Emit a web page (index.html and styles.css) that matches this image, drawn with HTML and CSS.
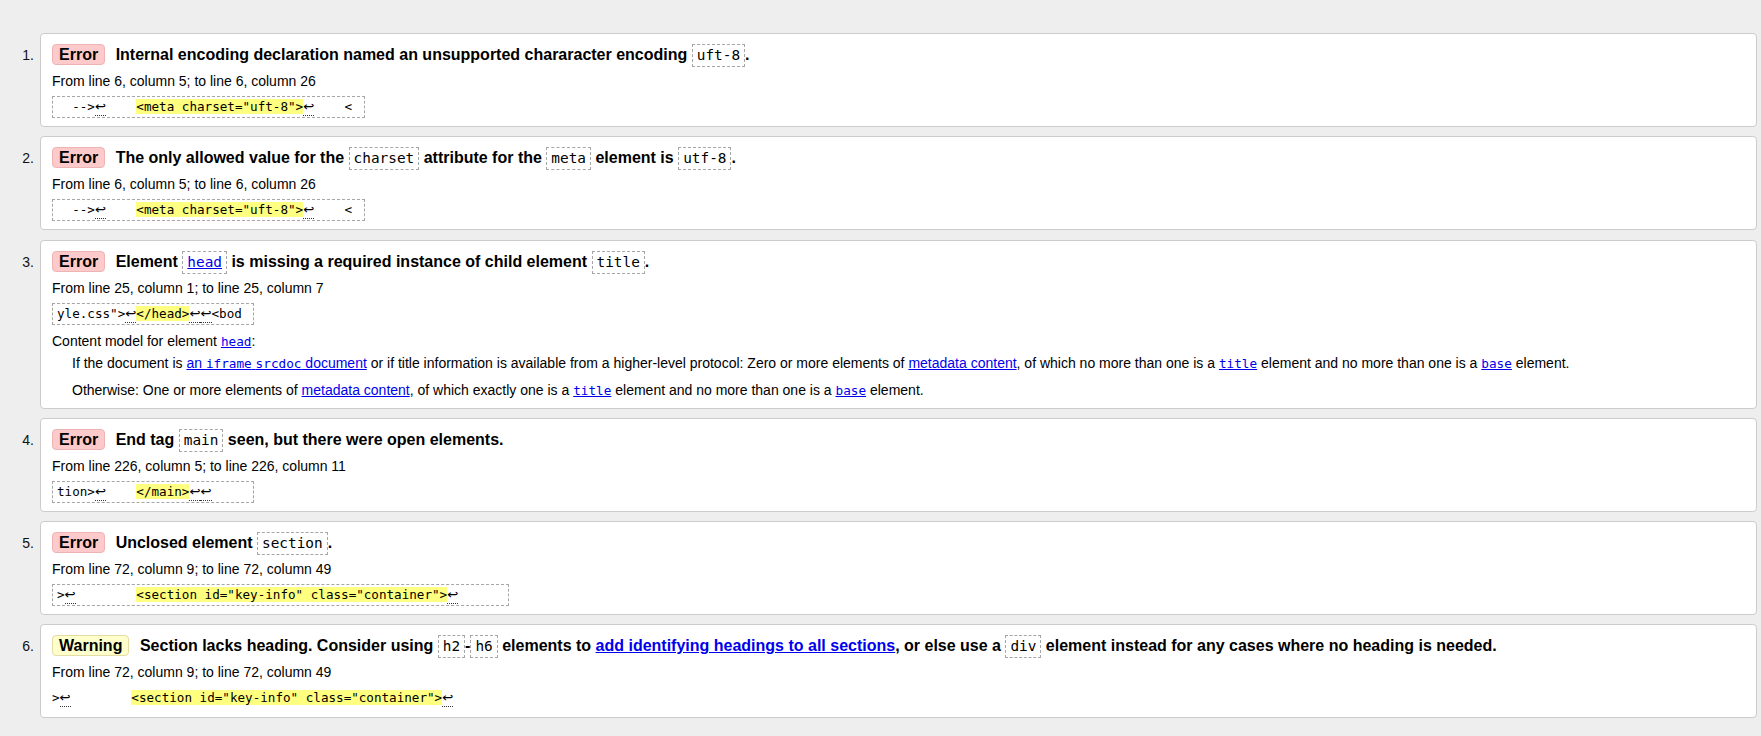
FILE: index.html
```html
<!DOCTYPE html>
<html lang="en">
<head>
<meta charset="utf-8">
<title>Validation messages</title>
<link rel="stylesheet" href="styles.css">
</head>
<body>
<main class="page">
<ol class="messages">
  <li class="msg">
    <span class="num">1.</span>
    <div class="card">
      <p class="title"><strong class="badge badge-error">Error</strong>Internal encoding declaration named an unsupported chararacter encoding <code class="tc">uft-8</code>.</p>
      <p class="loc">From line 6, column 5; to line 6, column 26</p>
      <code class="extract">  --&gt;<b class="nl">↩</b>    <mark>&lt;meta charset="uft-8"&gt;</mark><b class="nl">↩</b>    &lt; </code>
    </div>
  </li>
  <li class="msg">
    <span class="num">2.</span>
    <div class="card">
      <p class="title"><strong class="badge badge-error">Error</strong>The only allowed value for the <code class="tc">charset</code> attribute for the <code class="tc">meta</code> element is <code class="tc">utf-8</code>.</p>
      <p class="loc">From line 6, column 5; to line 6, column 26</p>
      <code class="extract">  --&gt;<b class="nl">↩</b>    <mark>&lt;meta charset="uft-8"&gt;</mark><b class="nl">↩</b>    &lt; </code>
    </div>
  </li>
  <li class="msg">
    <span class="num">3.</span>
    <div class="card">
      <p class="title"><strong class="badge badge-error">Error</strong>Element <code class="tc"><a href="#">head</a></code> is missing a required instance of child element <code class="tc">title</code>.</p>
      <p class="loc">From line 25, column 1; to line 25, column 7</p>
      <code class="extract">yle.css"&gt;<b class="nl">↩</b><mark>&lt;/head&gt;</mark><b class="nl">↩</b><b class="nl">↩</b>&lt;bod </code>
      <dl class="cm">
        <dt>Content model for element <a href="#"><code class="lc">head</code></a>:</dt>
        <dd>
          <p>If the document is <a href="#">an <code class="lc">iframe</code> <code class="lc">srcdoc</code> document</a> or if title information is available from a higher-level protocol: Zero or more elements of <a href="#">metadata content</a>, of which no more than one is a <a href="#"><code class="lc">title</code></a> element and no more than one is a <a href="#"><code class="lc">base</code></a> element.</p>
          <p>Otherwise: One or more elements of <a href="#">metadata content</a>, of which exactly one is a <a href="#"><code class="lc">title</code></a> element and no more than one is a <a href="#"><code class="lc">base</code></a> element.</p>
        </dd>
      </dl>
    </div>
  </li>
  <li class="msg">
    <span class="num">4.</span>
    <div class="card">
      <p class="title"><strong class="badge badge-error">Error</strong>End tag <code class="tc">main</code> seen, but there were open elements.</p>
      <p class="loc">From line 226, column 5; to line 226, column 11</p>
      <code class="extract">tion&gt;<b class="nl">↩</b>    <mark>&lt;/main&gt;</mark><b class="nl">↩</b><b class="nl">↩</b>     </code>
    </div>
  </li>
  <li class="msg">
    <span class="num">5.</span>
    <div class="card">
      <p class="title"><strong class="badge badge-error">Error</strong>Unclosed element <code class="tc">section</code>.</p>
      <p class="loc">From line 72, column 9; to line 72, column 49</p>
      <code class="extract">&gt;<b class="nl">↩</b>        <mark>&lt;section id="key-info" class="container"&gt;</mark><b class="nl">↩</b>      </code>
    </div>
  </li>
  <li class="msg">
    <span class="num">6.</span>
    <div class="card">
      <p class="title"><strong class="badge badge-warning">Warning</strong>Section lacks heading. Consider using <code class="tc">h2</code>-<code class="tc">h6</code> elements to <a href="#">add identifying headings to all sections</a>, or else use a <code class="tc">div</code> element instead for any cases where no heading is needed.</p>
      <p class="loc">From line 72, column 9; to line 72, column 49</p>
      <code class="extract plain">&gt;<b class="nl">↩</b>        <mark>&lt;section id="key-info" class="container"&gt;</mark><b class="nl">↩</b></code>
    </div>
  </li>
</ol>
</main>
</body>
</html>
```

FILE: styles.css
```css
html, body {
  margin: 0;
  background: #eeeeee;
}

body {
  font-family: "Liberation Sans", Arial, sans-serif;
  font-size: 14px;
  color: #000;
}

.page {
  padding: 33px 4px 16px 0;
}

.messages {
  list-style: none;
  margin: 0;
  padding: 0;
  display: flex;
  flex-direction: column;
  gap: 9.3px;
}

.msg {
  display: flex;
  align-items: baseline;
  gap: 6px;
}

.num {
  flex: 0 0 34px;
  text-align: right;
  font-size: 14px;
  color: #111;
}

.card {
  flex: 1;
  min-width: 0;
  background: #fff;
  border: 1px solid #cccccc;
  border-radius: 4px;
  padding: 9px 11px 8px;
}

.title {
  margin: 0;
  font-size: 16px;
  line-height: 24px;
  height: 24px;
  font-weight: bold;
}

.badge {
  display: inline-block;
  padding: 0 6px;
  line-height: 19px;
  border: 1px solid;
  border-radius: 4px;
  margin-right: 10.5px;
  font-weight: bold;
}

.badge-error {
  background: #fccaca;
  border-color: #eeb4b4;
}

.badge-warning {
  background: #ffffcc;
  border-color: #e4dca4;
}

a {
  color: #0000ee;
  text-decoration: underline;
}

.tc {
  display: inline-block;
  font-family: "DejaVu Sans Mono", "Liberation Mono", monospace;
  font-size: 14.4px;
  font-weight: normal;
  line-height: 19px;
  padding: 1px 4px;
  border: 1px dashed #a6a6a6;
}

.loc {
  margin: 5px 0 0;
  font-size: 14px;
  line-height: 18px;
}

.extract {
  display: block;
  width: max-content;
  height: 20px;
  margin-top: 6px;
  font-family: "DejaVu Sans Mono", "Liberation Mono", monospace;
  font-size: 12.6px;
  line-height: 20px;
  white-space: pre;
  padding: 0 4px;
  border: 1px dashed #a6a6a6;
}

.extract.plain {
  padding: 0;
  border-color: transparent;
  border-left: 0;
  border-right: 0;
}

.extract mark {
  background: #ffff80;
  color: #000;
}

.nl {
  display: inline-block;
  font-family: "DejaVu Sans", sans-serif;
  font-weight: normal;
  font-size: 13.2px;
  line-height: 16px;
  border-bottom: 1px dotted #333;
}

.lc {
  font-family: "DejaVu Sans Mono", "Liberation Mono", monospace;
  font-size: 12.7px;
  line-height: 12px;
}

.cm {
  margin: 7px 0 1px;
  line-height: 18px;
}

.cm dt {
  margin: 0;
  height: 18px;
}

.cm dd {
  margin: 4px 0 0 20px;
}

.cm dd p {
  margin: 0;
  height: 18px;
}

.cm dd p + p {
  margin-top: 9px;
}
```
